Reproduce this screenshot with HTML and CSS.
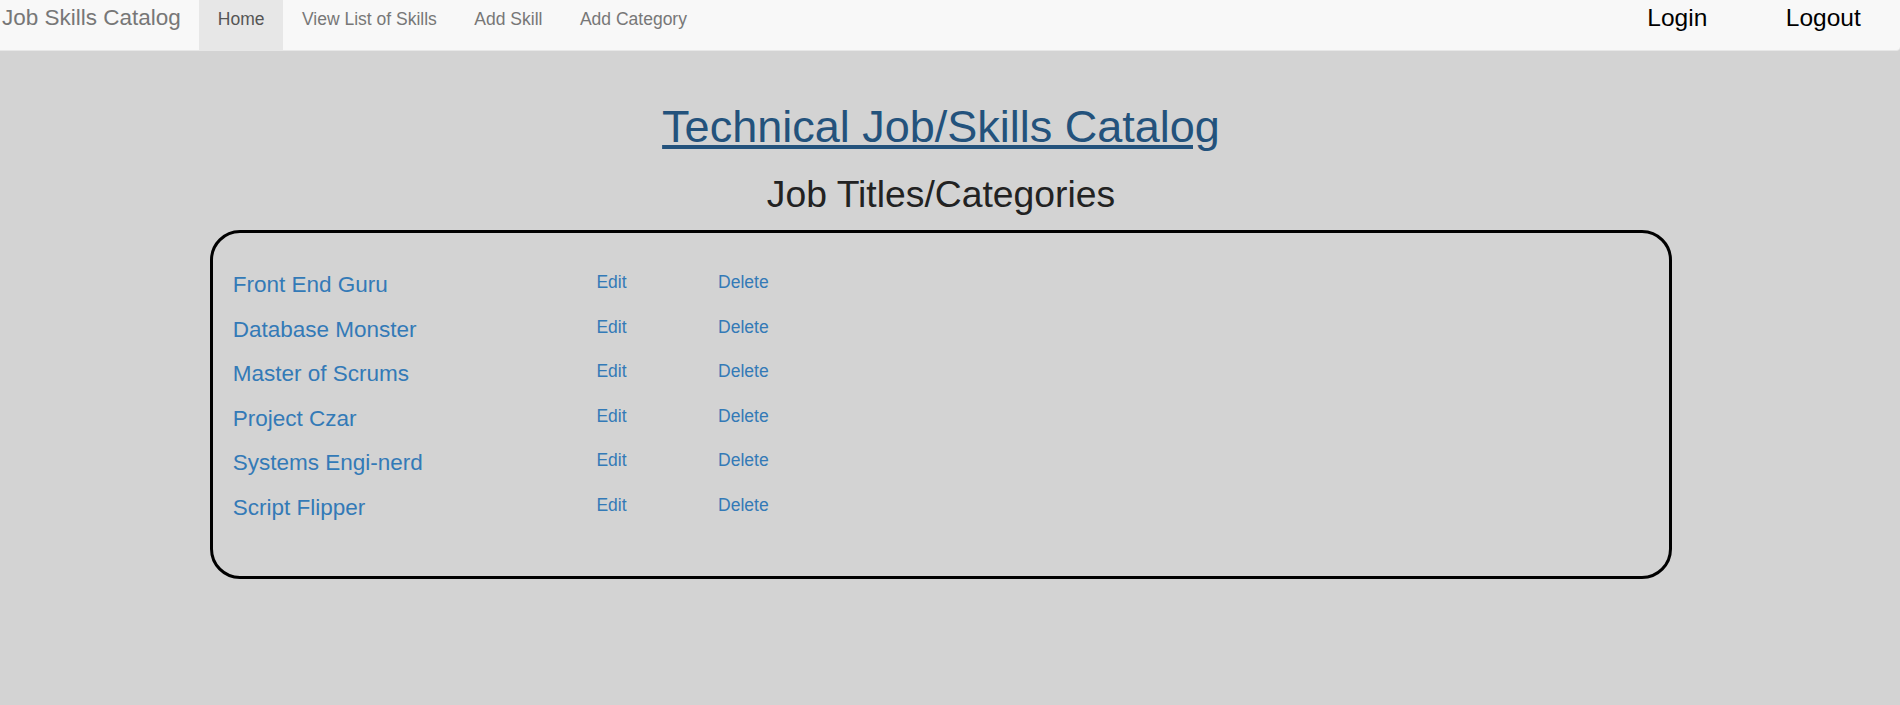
FILE: index.html
```html
<!DOCTYPE html>
<html lang="en">
<head>
<meta charset="utf-8">
<title>Job Skills Catalog</title>
<link rel="stylesheet" href="styles.css">
</head>
<body>
<nav class="navbar">
  <div class="nav-left">
    <a class="brand" href="#">Job Skills Catalog</a>
    <ul class="nav-links">
      <li><a class="nav-link active" href="#">Home</a></li>
      <li><a class="nav-link" href="#">View List of Skills</a></li>
      <li><a class="nav-link" href="#">Add Skill</a></li>
      <li><a class="nav-link" href="#">Add Category</a></li>
    </ul>
  </div>
  <ul class="nav-right">
    <li><a class="auth-link" href="#">Login</a></li>
    <li><a class="auth-link" href="#">Logout</a></li>
  </ul>
</nav>

<main class="page">
  <h1 class="page-title"><a href="#">Technical Job/Skills Catalog</a></h1>
  <h2 class="section-title">Job Titles/Categories</h2>
  <div class="catalog-box">
    <div class="row"><a class="cat-name" href="#">Front End Guru</a><a class="action edit" href="#">Edit</a><a class="action" href="#">Delete</a></div>
    <div class="row"><a class="cat-name" href="#">Database Monster</a><a class="action edit" href="#">Edit</a><a class="action" href="#">Delete</a></div>
    <div class="row"><a class="cat-name" href="#">Master of Scrums</a><a class="action edit" href="#">Edit</a><a class="action" href="#">Delete</a></div>
    <div class="row"><a class="cat-name" href="#">Project Czar</a><a class="action edit" href="#">Edit</a><a class="action" href="#">Delete</a></div>
    <div class="row"><a class="cat-name" href="#">Systems Engi-nerd</a><a class="action edit" href="#">Edit</a><a class="action" href="#">Delete</a></div>
    <div class="row"><a class="cat-name" href="#">Script Flipper</a><a class="action edit" href="#">Edit</a><a class="action" href="#">Delete</a></div>
  </div>
</main>
</body>
</html>
```

FILE: styles.css
```css
* {
  box-sizing: border-box;
}

html, body {
  margin: 0;
  padding: 0;
}

body {
  background: #d3d3d3;
  font-family: "Liberation Sans", Arial, Helvetica, sans-serif;
  color: #333;
  min-height: 705px;
}

a {
  text-decoration: none;
}

ul {
  list-style: none;
  margin: 0;
  padding: 0;
}

/* Navbar */
.navbar {
  display: flex;
  justify-content: space-between;
  height: 51px;
  background: #f8f8f8;
  border-bottom: 1px solid #e7e7e7;
  border-radius: 0 0 4px 0;
}

.nav-left {
  display: flex;
}

.brand {
  display: block;
  font-size: 22.5px;
  line-height: 1;
  padding: 7px 18.2px 0 2px;
  color: #777;
}

.nav-links {
  display: flex;
}

.nav-link {
  display: block;
  height: 50px;
  font-size: 17.5px;
  line-height: 1;
  padding: 10.5px 18.75px 0;
  color: #777;
}

.nav-link.active {
  background: #e7e7e7;
  color: #555;
}

.nav-right {
  display: flex;
}

.auth-link {
  display: block;
  font-size: 24.5px;
  line-height: 1;
  padding: 6px 39.25px 0;
  color: #000;
}

/* Main */
.page {
  width: 1882px;
  padding-top: 52.5px;
  text-align: center;
}

.page-title {
  margin: 0;
  font-size: 45px;
  line-height: 1;
  font-weight: normal;
}

.page-title a {
  color: #23527c;
  text-decoration: underline;
}

.section-title {
  margin: 27.5px 0 0;
  font-size: 37.3px;
  line-height: 1;
  font-weight: normal;
  color: #222;
}

.catalog-box {
  width: 1461.5px;
  margin: 17px auto 0;
  border: 3px solid #000;
  border-radius: 30px;
  padding: 40.7px 19.5px 34px;
  text-align: left;
}

.row {
  display: flex;
  align-items: flex-start;
  height: 44.6px;
}

.cat-name {
  width: 363.7px;
  font-size: 22.5px;
  line-height: 1;
  color: #337ab7;
}

.action {
  font-size: 17.5px;
  line-height: 1;
  color: #337ab7;
}

.action.edit {
  width: 121.6px;
}
```
